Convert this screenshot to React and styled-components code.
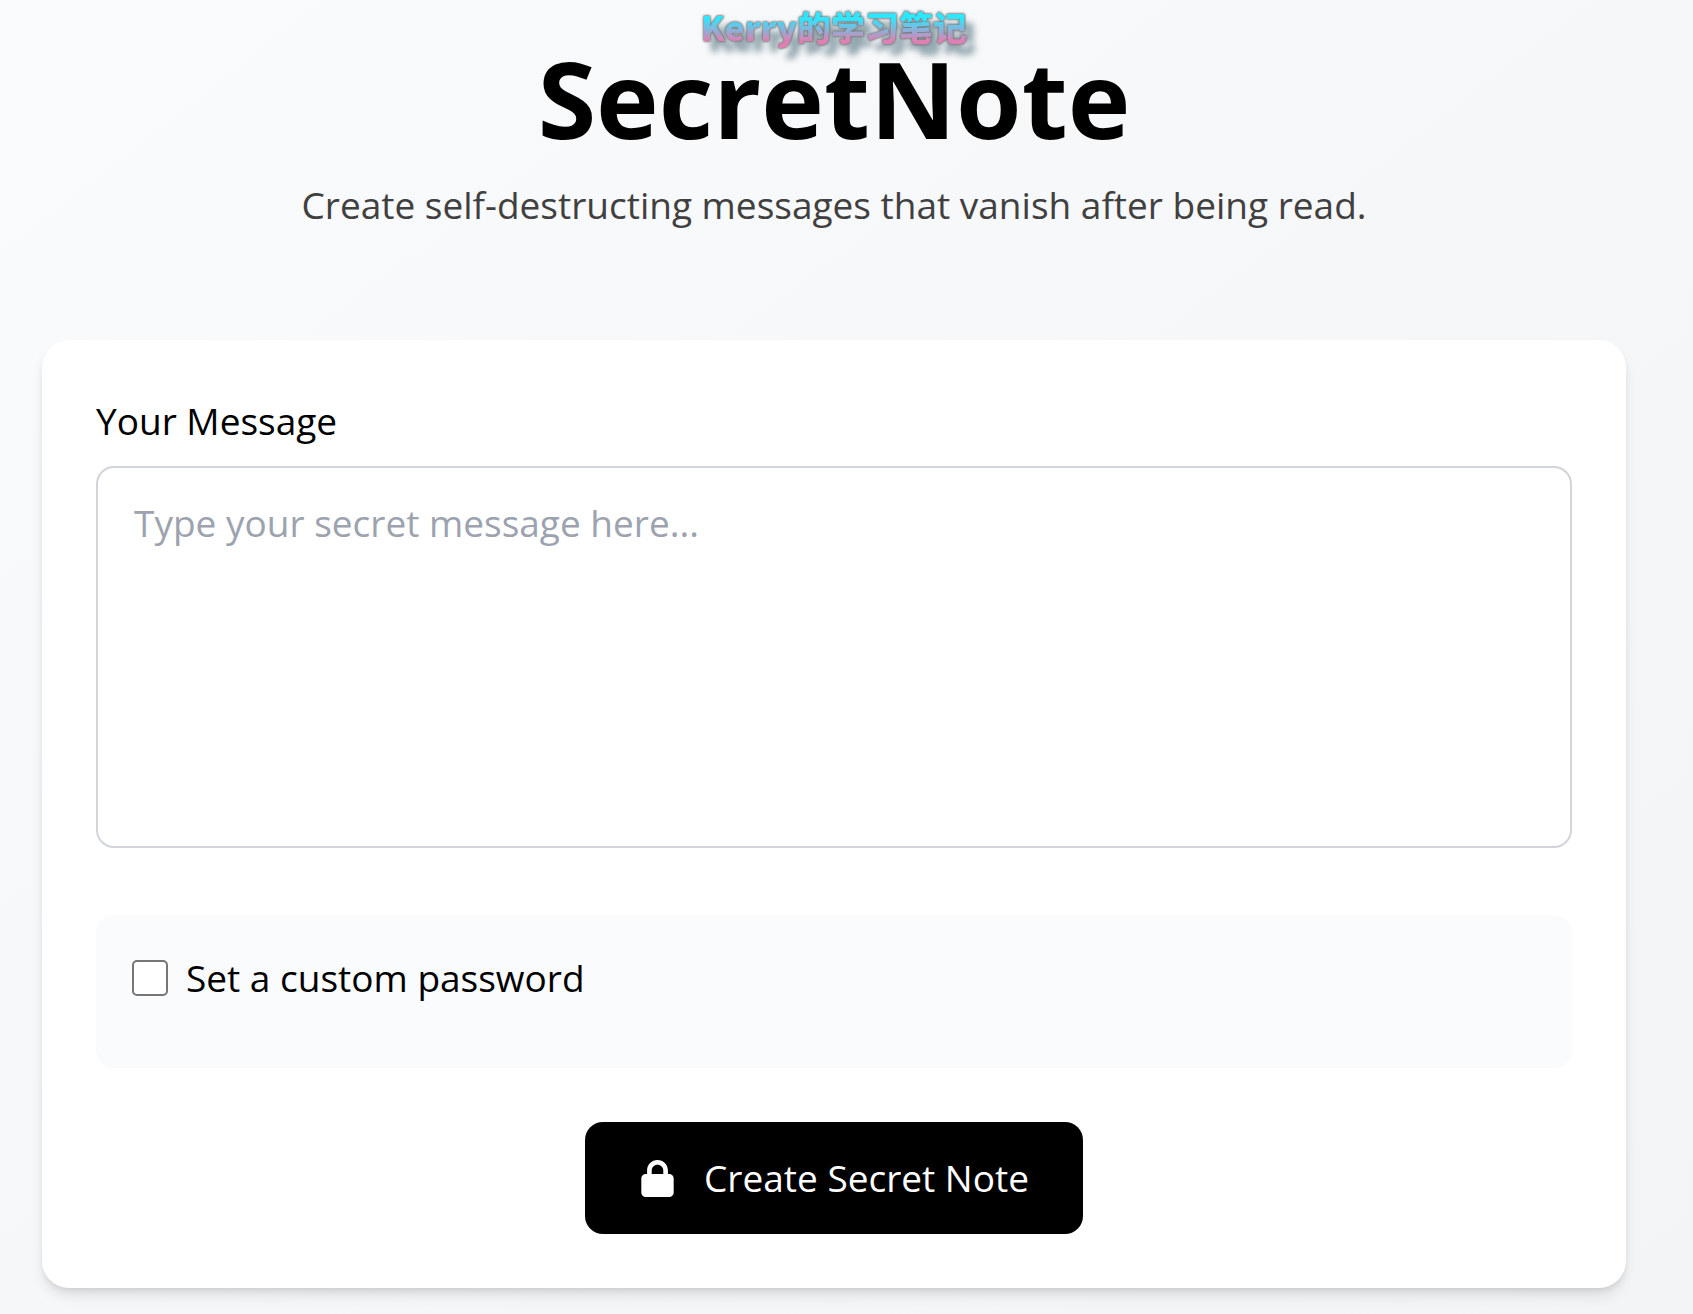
import { useState } from 'react'
import styled, { createGlobalStyle } from 'styled-components'
import { FaLock } from 'react-icons/fa6'

const GlobalStyle = createGlobalStyle`
    * {
        box-sizing: border-box;
    }
    body {
        margin: 0;
        font-family: 'Open Sans', 'Noto Sans', 'Noto Sans CJK SC', sans-serif;
        font-size: 37px;
        line-height: 54px;
        color: #000;
    }
`;

const Page = styled.main`
    min-height: 100vh;
    padding: 38px 67px 26px 42px;
    background: linear-gradient(to bottom right, #fafbfc, #f6f7f9 50%, #f3f4f6);
`;

const Header = styled.header`
    position: relative;
    margin-bottom: 108px;
    text-align: center;
`;

const Title = styled.h1`
    margin: 0 0 20px;
    font-size: 106px;
    font-weight: 700;
    line-height: 120px;
`;

const Subtitle = styled.p`
    margin: 0;
    color: #404040;
`;

const Watermark = styled.span`
    position: absolute;
    top: -38px;
    left: 50%;
    transform: translateX(-50%);
    font-family: 'Noto Sans CJK SC', sans-serif;
    font-size: 34px;
    font-weight: 900;
    line-height: 54px;
    white-space: nowrap;
    color: transparent;
    background: linear-gradient(#2fe6ff 35%, #df80b4 75%);
    background-clip: text;
    filter: drop-shadow(0 0 1px #777) drop-shadow(0 0 1px #777) drop-shadow(8px 10px 3px rgba(40, 80, 96, 0.5));
`;

const Card = styled.form`
    display: flex;
    flex-direction: column;
    padding: 54px;
    border-radius: 27px;
    background: #fff;
    box-shadow: 0 9px 14px -2px rgba(0, 0, 0, 0.1), 0 4px 9px -4px rgba(0, 0, 0, 0.14);
`;

const Label = styled.label`
    margin-bottom: 18px;
`;

const MessageBox = styled.textarea`
    width: 100%;
    height: 382px;
    margin-bottom: 67px;
    padding: 28px 36px;
    border: 2px solid #d1d5db;
    border-radius: 18px;
    background: #fff;
    color: #000;
    font: inherit;
    resize: none;
    outline: none;

    &::placeholder {
        color: #9ca3af;
        opacity: 1;
    }
`;

const PasswordPanel = styled.div`
    min-height: 153px;
    margin-bottom: 54px;
    padding: 36px;
    border-radius: 18px;
    background: #fafbfd;
`;

const CheckLabel = styled.label`
    display: flex;
    align-items: center;
    gap: 18px;
`;

const Checkbox = styled.input`
    appearance: none;
    width: 36px;
    height: 36px;
    margin: 0;
    border: 2px solid #767676;
    border-radius: 5px;
    background: ${(props) => props.checked ? '#767676' : '#fff'};
`;

const CreateButton = styled.button`
    display: flex;
    align-items: center;
    align-self: center;
    gap: 28px;
    padding: 29px 54px;
    border: 0;
    border-radius: 18px;
    background: #000;
    color: #fff;
    font: inherit;
    cursor: pointer;
`;

function App() {
    const [message, setMessage] = useState('');
    const [custom, setCustom] = useState(false);

    return (
        <Page>
            <GlobalStyle />
            <Header>
                <Title>SecretNote</Title>
                <Subtitle>Create self-destructing messages that vanish after being read.</Subtitle>
                <Watermark>Kerry的学习笔记</Watermark>
            </Header>
            <Card onSubmit={(e) => e.preventDefault()}>
                <Label htmlFor="message">Your Message</Label>
                <MessageBox
                    id="message"
                    placeholder="Type your secret message here..."
                    value={message}
                    onChange={(e) => setMessage(e.target.value)}
                />
                <PasswordPanel>
                    <CheckLabel>
                        <Checkbox type="checkbox" checked={custom} onChange={(e) => setCustom(e.target.checked)} />
                        Set a custom password
                    </CheckLabel>
                </PasswordPanel>
                <CreateButton type="submit">
                    <FaLock aria-hidden="true" />
                    Create Secret Note
                </CreateButton>
            </Card>
        </Page>
    )
}

export default App;
